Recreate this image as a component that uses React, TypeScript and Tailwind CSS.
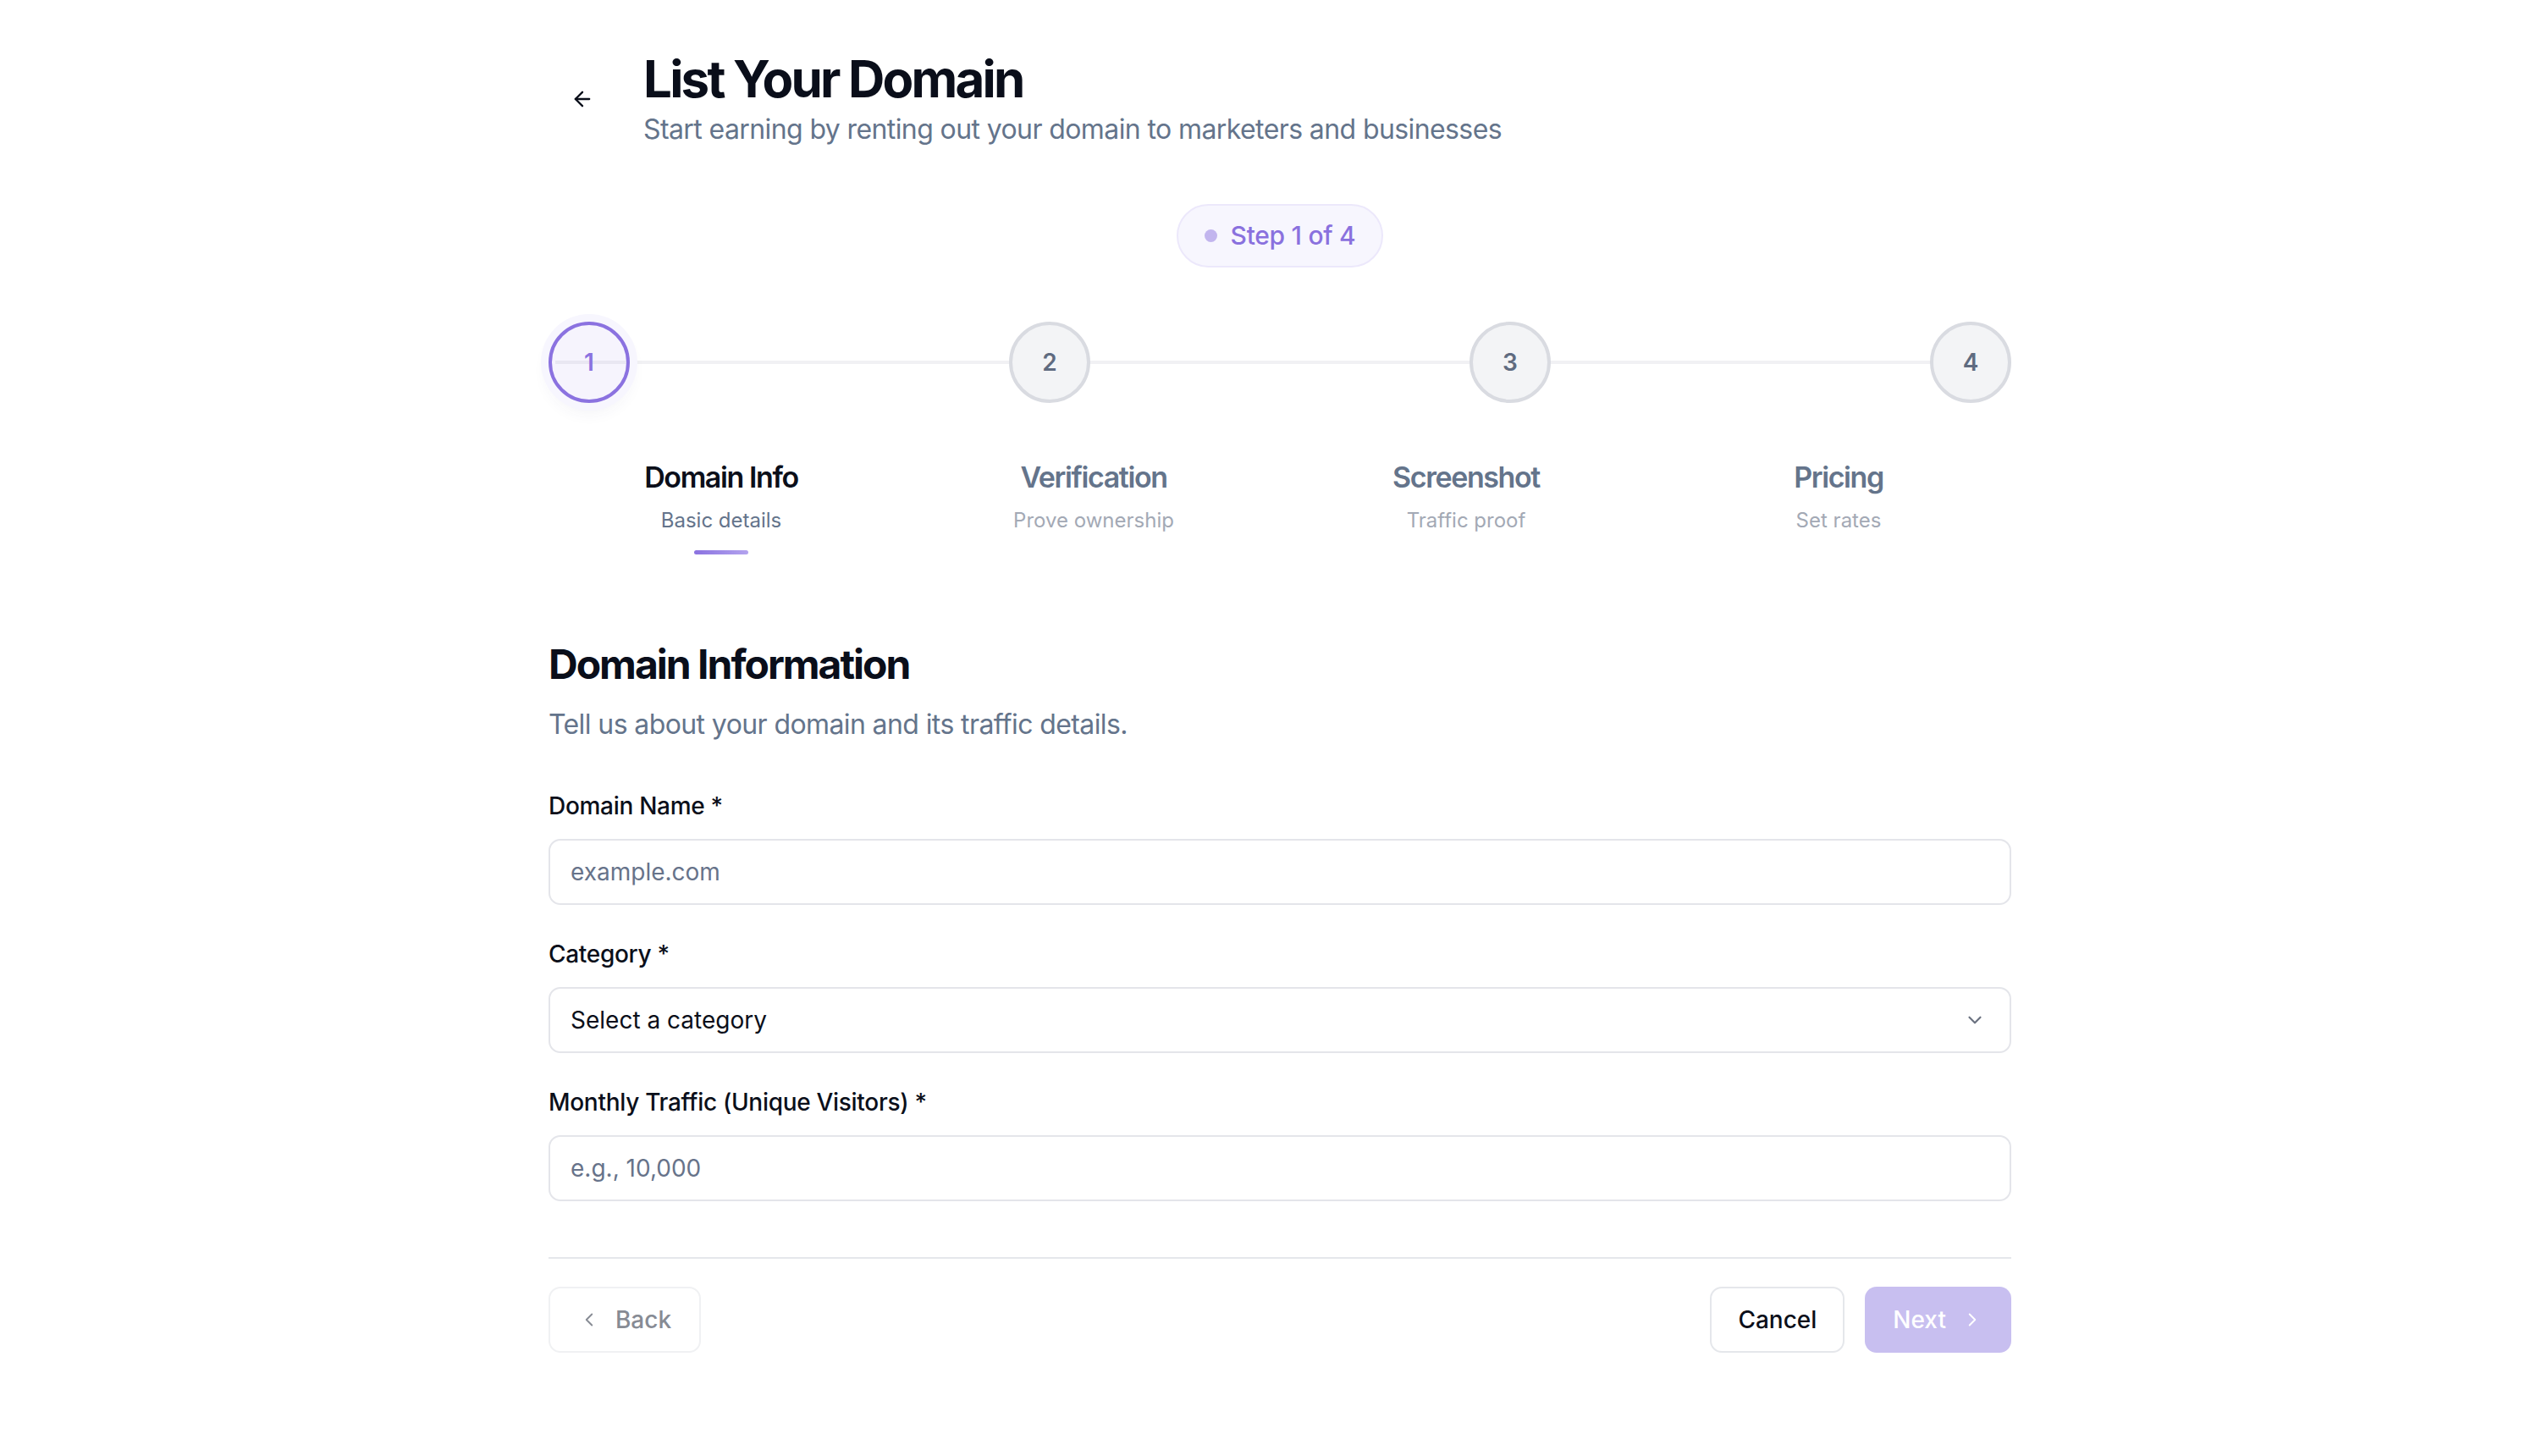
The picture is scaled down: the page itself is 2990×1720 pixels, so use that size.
import { ArrowLeft, ChevronDown, ChevronLeft, ChevronRight } from "lucide-react";

type Step = {
    n: number;
    title: string;
    sub: string;
};

const steps: Step[] = [
    { n: 1, title: "Domain Info", sub: "Basic details" },
    { n: 2, title: "Verification", sub: "Prove ownership" },
    { n: 3, title: "Screenshot", sub: "Traffic proof" },
    { n: 4, title: "Pricing", sub: "Set rates" },
];

function Field({ label, children }: { label: string; children: React.ReactNode }) {
    return (
        <div className="flex flex-col">
            <label className="h-[40px] flex items-center text-[28px] font-medium tracking-[-0.3px] text-[#0b0f1a]">{label}</label>
            <div className="mt-[19px]">{children}</div>
        </div>
    );
}

export default function App() {
    const current = 1;

    return (
        <div className="min-h-screen w-full bg-white font-['Inter',_'Liberation_Sans',_sans-serif] text-[#0b0f1a]">
            <div className="flex justify-center pl-[34px]">
                <div className="w-[1728px] pt-[57px] pb-[80px]">
                    {/* header */}
                    <div className="flex items-center gap-[32px]">
                        <button className="w-[80px] h-[80px] flex items-center justify-center text-[#0b0f1a]">
                            <ArrowLeft size={28} strokeWidth={2} />
                        </button>
                        <div className="flex flex-col">
                            <h1 className="text-[60px] leading-[72px] font-bold tracking-[-2.8px] text-[#0a0e1a]">List Your Domain</h1>
                            <p className="text-[32px] leading-[48px] tracking-[-0.6px] text-[#64748b]">
                                Start earning by renting out your domain to marketers and businesses
                            </p>
                        </div>
                    </div>

                    {/* step pill */}
                    <div className="mt-[64px] flex justify-center">
                        <div className="h-[75px] px-[31px] flex items-center gap-[16px] rounded-full bg-[#f7f6fe] border-2 border-[#ece8fb]">
                            <span className="w-[15px] h-[15px] rounded-full bg-[#c2b5ee]" />
                            <span className="text-[30px] font-medium tracking-[-0.3px] text-[#8a71de]">Step 1 of 4</span>
                        </div>
                    </div>

                    {/* stepper */}
                    <div className="mt-[64px] relative flex items-center justify-between">
                        <div className="absolute left-[8px] right-[48px] top-1/2 -translate-y-1/2 h-[4px] bg-[#f1f1f4]" />
                        {steps.map((s) =>
                            s.n === current ? (
                                <div
                                    key={s.n}
                                    className="relative w-[96px] h-[96px] rounded-full border-[4px] border-[#8b72e0] bg-[#8b72e0]/8 flex items-center justify-center text-[28px] font-semibold text-[#8b72e0] shadow-[0_0_0_9px_#f7f6fe,0_10px_20px_rgba(60,50,120,0.07)]"
                                >
                                    {s.n}
                                </div>
                            ) : (
                                <div
                                    key={s.n}
                                    className="relative w-[96px] h-[96px] rounded-full border-[4px] border-[#d9dbe1] bg-[#f3f4f6] flex items-center justify-center text-[28px] font-semibold text-[#5f6b80]"
                                >
                                    {s.n}
                                </div>
                            )
                        )}
                    </div>

                    <div className="mt-[66px] grid grid-cols-4 gap-[32px]">
                        {steps.map((s) => (
                            <div key={s.n} className="flex flex-col items-center">
                                <div
                                    className={
                                        s.n === current
                                            ? "text-[34px] leading-[44px] font-semibold tracking-[-1.4px] text-[#0b0f1a]"
                                            : "text-[34px] leading-[44px] font-semibold tracking-[-1.4px] text-[#64748b]"
                                    }
                                >
                                    {s.title}
                                </div>
                                <div
                                    className={
                                        s.n === current
                                            ? "mt-[13px] text-[24px] leading-[32px] text-[#64748b]"
                                            : "mt-[13px] text-[24px] leading-[32px] text-[#a3a9b5]"
                                    }
                                >
                                    {s.sub}
                                </div>
                                {s.n === current && (
                                    <div className="mt-[19px] w-[64px] h-[5px] rounded-full bg-gradient-to-r from-[#8b72e0] to-[#b3a3ee]" />
                                )}
                            </div>
                        ))}
                    </div>

                    {/* form */}
                    <h2 className="mt-[100px] text-[48px] leading-[60px] font-bold tracking-[-2px] text-[#0a0e1a]">
                        Domain Information
                    </h2>
                    <p className="mt-[17px] text-[32px] leading-[48px] tracking-[-0.6px] text-[#64748b]">
                        Tell us about your domain and its traffic details.
                    </p>

                    <div className="mt-[52px] flex flex-col gap-[38px]">
                        <Field label="Domain Name *">
                            <input
                                placeholder="example.com"
                                className="w-full h-[78px] px-[24px] rounded-[14px] border-2 border-[#e4e5ea] text-[28px] text-[#0b0f1a] placeholder:text-[#67738a] outline-none"
                            />
                        </Field>
                        <Field label="Category *">
                            <div className="w-full h-[78px] pl-[24px] pr-[28px] rounded-[14px] border-2 border-[#e4e5ea] flex items-center justify-between">
                                <span className="text-[28px] text-[#0b0f1a]">Select a category</span>
                                <ChevronDown size={26} strokeWidth={2} className="text-[#6b7280]" />
                            </div>
                        </Field>
                        <Field label="Monthly Traffic (Unique Visitors) *">
                            <input
                                placeholder="e.g., 10,000"
                                className="w-full h-[78px] px-[24px] rounded-[14px] border-2 border-[#e4e5ea] text-[28px] text-[#0b0f1a] placeholder:text-[#67738a] outline-none"
                            />
                        </Field>
                    </div>

                    <div className="mt-[66px] h-[2px] bg-[#e5e7eb]" />

                    <div className="mt-[33px] flex items-center justify-between">
                        <button className="h-[78px] w-[180px] flex items-center justify-center gap-[18px] rounded-[14px] border-2 border-[#f0f1f3] text-[28px] font-medium text-[#878b94]">
                            <ChevronLeft size={26} strokeWidth={1.75} />
                            Back
                        </button>
                        <div className="flex items-center gap-[24px]">
                            <button className="h-[78px] px-[31px] rounded-[14px] border-2 border-[#e5e7eb] text-[28px] font-medium text-[#0b0f1a]">
                                Cancel
                            </button>
                            <button className="h-[78px] px-[33px] flex items-center gap-[18px] rounded-[14px] bg-[#c8bff0] text-[28px] font-medium text-white">
                                Next
                                <ChevronRight size={26} strokeWidth={1.75} />
                            </button>
                        </div>
                    </div>
                </div>
            </div>
        </div>
    );
}
